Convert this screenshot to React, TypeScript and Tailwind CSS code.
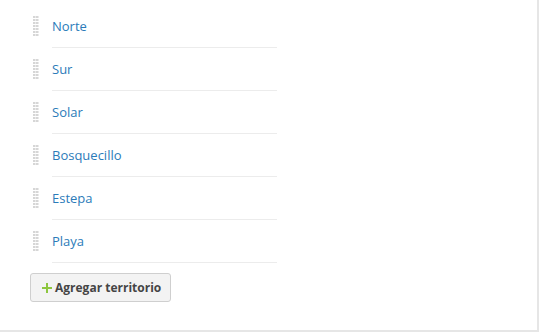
import React from "react";

const items = ["Norte", "Sur", "Solar", "Bosquecillo", "Estepa", "Playa"];

function Handle() {
  const dots = [];
  for (let r = 0; r < 7; r++) {
    for (let c = 0; c < 2; c++) {
      dots.push(<rect key={`${r}-${c}`} x={c * 3} y={r * 3} width={2.5} height={2} fill="#d6d6d6" />);
    }
  }
  return (
    <svg width="6" height="21" viewBox="0 0 6 21" className="shrink-0">
      {dots}
    </svg>
  );
}

export default function App() {
  return (
    <div className="w-[541px] h-[334px] bg-white" style={{ fontFamily: '"Open Sans", sans-serif' }}>
      <div className="w-[539px] h-[332px] border-r-2 border-b-2 border-[#e6e6e6] bg-white pt-[5px] pl-[33px]">
        <ul>
          {items.map((t) => (
            <li key={t} className="flex items-center h-[43px]">
              <Handle />
              <div className="ml-[13px] w-[225px] h-[43px] flex items-center pt-[2px] border-b border-[#ececec] text-[13px] text-[#2b7bb9]">
                {t}
              </div>
            </li>
          ))}
        </ul>
        <button className="mt-[10px] -ml-[3px] w-[141px] h-[29px] flex items-center pl-[11px] gap-[3px] bg-[#f3f3f3] border border-[#cfcfcf] rounded-[3px] text-[12px] font-bold text-[#454545] whitespace-nowrap">
          <svg width="10" height="10" viewBox="0 0 10 10" className="shrink-0">
            <path d="M5 0V10M0 5H10" stroke="#8dc63f" strokeWidth="2" />
          </svg>
          <span>Agregar territorio</span>
        </button>
      </div>
    </div>
  );
}
